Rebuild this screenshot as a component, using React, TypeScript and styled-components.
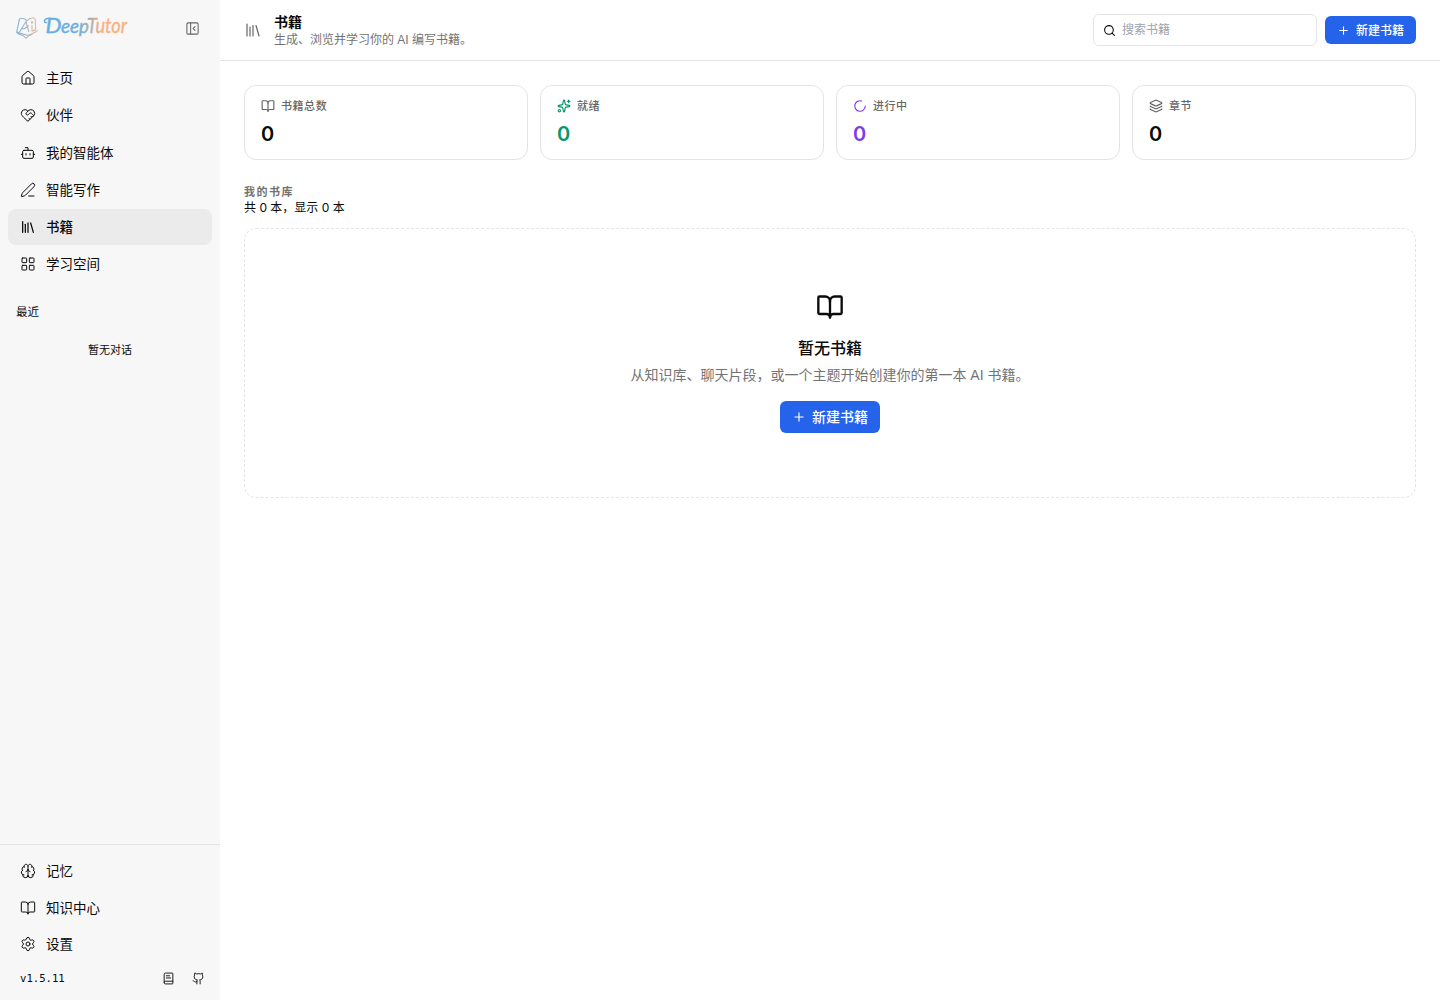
import React from 'react';
import styled, { createGlobalStyle } from 'styled-components';
import {
  BookOpen,
  Bot,
  Brain,
  Github,
  HeartHandshake,
  House,
  Layers,
  LayoutGrid,
  Library,
  LoaderCircle,
  PanelLeftClose,
  PenLine,
  Plus,
  Search,
  Settings,
  Sparkles,
  BookText,
} from 'lucide-react';

const GlobalStyle = createGlobalStyle`
  * {
    box-sizing: border-box;
  }
  body {
    margin: 0;
    background: #fff;
    color: #0a0a0a;
    font-family: Inter, 'Noto Sans CJK SC', sans-serif;
    font-size: 14px;
    line-height: 1.5;
    -webkit-font-smoothing: antialiased;
  }
  h1, h2, p {
    margin: 0;
  }
  svg {
    flex-shrink: 0;
  }
`;

const Layout = styled.div`
  display: flex;
  height: 100vh;
  overflow: hidden;
`;

const Sidebar = styled.aside`
  display: flex;
  flex-direction: column;
  width: 220px;
  flex-shrink: 0;
  background: #f7f7f7;
`;

const SidebarHeader = styled.div`
  display: flex;
  align-items: center;
  justify-content: space-between;
  height: 56px;
  padding: 0 20px 0 16px;
  color: #666;
`;

const Nav = styled.nav<{ $gap: number }>`
  display: flex;
  flex-direction: column;
  gap: ${({ $gap }) => $gap}px;
  padding: 0 8px;
`;

const MainNav = styled(Nav)`
  margin-top: 4px;
`;

const NavItem = styled.a<{ $active?: boolean }>`
  display: flex;
  align-items: center;
  gap: 10px;
  padding: 8px 12px;
  border-radius: 8px;
  font-size: 13.5px;
  line-height: 20.25px;
  font-weight: ${({ $active }) => ($active ? 500 : 400)};
  background: ${({ $active }) => ($active ? '#ebebeb' : 'transparent')};
`;

const RecentTitle = styled.div`
  margin-top: 21px;
  padding: 0 16px;
  font-size: 11.5px;
  line-height: 16.5px;
`;

const RecentEmpty = styled.div`
  margin-top: 22px;
  text-align: center;
  font-size: 11px;
  line-height: 16.5px;
`;

const SidebarFooter = styled.div`
  margin-top: auto;
  height: 156px;
  padding-top: 8px;
  border-top: 1px solid #e4e4e4;
`;

const VersionRow = styled.div`
  display: flex;
  align-items: center;
  justify-content: space-between;
  height: 32px;
  padding: 0 15px 0 20px;
  font-family: 'DejaVu Sans Mono', monospace;
  font-size: 10.6px;
`;

const VersionText = styled.span`
  padding-top: 2px;
`;

const VersionLinks = styled.div`
  display: flex;
  gap: 17px;
`;

const Main = styled.main`
  flex: 1;
  min-width: 0;
`;

const PageHeader = styled.header`
  display: flex;
  align-items: center;
  justify-content: space-between;
  height: 61px;
  padding: 0 24px;
  border-bottom: 1px solid #e4e4e4;
`;

const HeaderLeft = styled.div`
  display: flex;
  align-items: center;
  gap: 12px;
  color: #666;
`;

const HeaderText = styled.div`
  padding-top: 2px;
`;

const PageTitle = styled.h1`
  color: #0a0a0a;
  font-size: 14px;
  font-weight: 600;
  line-height: 17.5px;
`;

const PageSubtitle = styled.p`
  color: #737373;
  font-family: 'Liberation Sans', 'Noto Sans CJK SC', sans-serif;
  font-size: 12px;
  line-height: 18px;
`;

const HeaderRight = styled.div`
  display: flex;
  align-items: center;
  gap: 8px;
`;

const SearchBox = styled.label`
  display: flex;
  align-items: center;
  gap: 6px;
  width: 224px;
  height: 32px;
  padding: 0 9px;
  border: 1px solid #e4e4e4;
  border-radius: 6px;
`;

const SearchInput = styled.input`
  flex: 1;
  min-width: 0;
  padding: 0 0 2px;
  border: 0;
  outline: 0;
  background: transparent;
  font-family: inherit;
  font-size: 12px;

  &::placeholder {
    color: #9ca3af;
  }
`;

const PrimaryBtn = styled.button<{ $small?: boolean }>`
  display: inline-flex;
  align-items: center;
  justify-content: center;
  gap: 6px;
  height: ${({ $small }) => ($small ? 28 : 32)}px;
  padding: 0 12px;
  border: 0;
  border-radius: 6px;
  background: #2563eb;
  color: #fff;
  font-family: inherit;
  font-size: ${({ $small }) => ($small ? 12 : 14)}px;
  font-weight: 500;

  span {
    padding-bottom: 2px;
  }
`;

const Content = styled.section`
  padding: 24px;
`;

const StatGrid = styled.div`
  display: grid;
  grid-template-columns: repeat(4, 1fr);
  gap: 12px;
`;

const StatCard = styled.div<{ $color: string; $icon: string }>`
  height: 75px;
  padding: 12px 16px;
  border: 1px solid #e4e4e4;
  border-radius: 12px;
  color: ${({ $color }) => $color};

  svg {
    color: ${({ $icon }) => $icon};
  }
`;

const StatLabel = styled.div`
  display: flex;
  align-items: center;
  gap: 6px;
  color: #666;
  font-size: 11px;
  font-weight: 500;
  line-height: 16.5px;
  letter-spacing: 0.05em;
`;

const StatValue = styled.div`
  margin-top: 5px;
  font-size: 20px;
  font-weight: 600;
  line-height: 28px;
`;

const LibraryTitle = styled.h2`
  margin-top: 24px;
  color: #737373;
  font-size: 11px;
  font-weight: 600;
  line-height: 16.5px;
  letter-spacing: 0.14em;
`;

const LibraryCount = styled.p`
  height: 15px;
  font-size: 12px;
  line-height: 14px;
`;

const EmptyPanel = styled.div`
  display: flex;
  flex-direction: column;
  align-items: center;
  height: 270px;
  margin-top: 12px;
  padding-top: 64px;
  border: 1px dashed #e4e4e4;
  border-radius: 12px;
`;

const EmptyTitle = styled.h2`
  margin-top: 15px;
  font-size: 16px;
  font-weight: 500;
  line-height: 24px;
`;

const EmptyText = styled.p`
  margin: 5px 0 16px;
  color: #737373;
  font-family: 'Liberation Sans', 'Noto Sans CJK SC', sans-serif;
  font-size: 14px;
  line-height: 20px;
`;

const Logo = () => (
  <svg width="120" height="34" viewBox="0 0 120 34" fill="none">
    <defs>
      <linearGradient id="mark" x1="0" y1="0" x2="22" y2="0" gradientUnits="userSpaceOnUse">
        <stop offset="0.1" stopColor="#7fb2dc" />
        <stop offset="0.6" stopColor="#b5b5b5" />
        <stop offset="1" stopColor="#efbd98" />
      </linearGradient>
      <linearGradient id="word" x1="28" y1="0" x2="112" y2="0" gradientUnits="userSpaceOnUse">
        <stop offset="0.4" stopColor="#6aaee0" />
        <stop offset="0.56" stopColor="#b0b0ac" />
        <stop offset="0.68" stopColor="#f7b27f" />
      </linearGradient>
    </defs>
    <g transform="translate(0 1)" stroke="url(#mark)" strokeWidth="1.1" strokeLinecap="round" strokeLinejoin="round">
      <path d="M3.200 8 1 18.500c-.4 2 .3 3.300 2.300 3.800 2.700.6 4.700.7 6.700 4 1.700-2.500 3.700-3.300 6-3.800" />
      <path d="M3.200 8c.4-1.500 1.300-1.900 2.800-1.700 2 .2 3.700.9 5 2.500 1.300-1.600 3.500-2.800 5.800-3 1.600-.1 2.400.5 2.500 2l.4 10.500" />
      <path d="M3.500 20 10 9.500l2.800 10.200M5.500 17c3 0 5-1.200 6.800-3" />
      <path d="M16 13.500v5.200c1 .5 2-.2 3-1" />
      <path d="M1 20c2.500 2.300 6 1.500 8.500 2.700 2.500 1.200 4.500.3 6.500-1 1.500-1 3.700-1.200 5.300-3" />
      <circle cx="16" cy="10.500" r=".6" />
    </g>
    <path d="M30.500 11.500c-2.300.3-2.700-2-1.200-3.200 1.200-.9 2.800-1.100 5-1.100" stroke="#6aaee0" strokeWidth="1.500" strokeLinecap="round" />
    <g
      fill="url(#word)"
      stroke="url(#word)"
      strokeWidth="0.4"
      fontFamily="Lato, sans-serif"
      fontSize="20.500"
      fontStyle="italic"
      fontWeight="400"
    >
      <text x="29.500" y="22" textLength="16" lengthAdjust="spacingAndGlyphs">
        D
      </text>
      <text x="45" y="22" fontSize="19" textLength="28" lengthAdjust="spacingAndGlyphs">
        eep
      </text>
      <text x="71" y="22" textLength="40" lengthAdjust="spacingAndGlyphs">
        Tutor
      </text>
    </g>
  </svg>
);

const mainItems = [
  { label: '主页', icon: House },
  { label: '伙伴', icon: HeartHandshake },
  { label: '我的智能体', icon: Bot },
  { label: '智能写作', icon: PenLine },
  { label: '书籍', icon: Library, active: true },
  { label: '学习空间', icon: LayoutGrid },
];

const footerItems = [
  { label: '记忆', icon: Brain },
  { label: '知识中心', icon: BookOpen },
  { label: '设置', icon: Settings },
];

const stats = [
  { label: '书籍总数', icon: BookOpen, color: '#0a0a0a', iconColor: '#666' },
  { label: '就绪', icon: Sparkles, color: '#059669', iconColor: '#059669' },
  { label: '进行中', icon: LoaderCircle, color: '#7c3aed', iconColor: '#7c3aed' },
  { label: '章节', icon: Layers, color: '#0a0a0a', iconColor: '#666' },
];

const App = () => {
  return (
    <>
      <GlobalStyle />
      <Layout>
        <Sidebar>
          <SidebarHeader>
            <Logo />
            <PanelLeftClose size={15} strokeWidth={1.7} />
          </SidebarHeader>
          <MainNav $gap={1}>
            {mainItems.map(({ label, icon: Icon, active }) => (
              <NavItem key={label} $active={active}>
                <Icon size={16} strokeWidth={active ? 1.9 : 1.5} />
                {label}
              </NavItem>
            ))}
          </MainNav>
          <RecentTitle>最近</RecentTitle>
          <RecentEmpty>暂无对话</RecentEmpty>
          <SidebarFooter>
            <Nav $gap={0.25}>
              {footerItems.map(({ label, icon: Icon }) => (
                <NavItem key={label}>
                  <Icon size={16} strokeWidth={1.5} />
                  {label}
                </NavItem>
              ))}
            </Nav>
            <VersionRow>
              <VersionText>v1.5.11</VersionText>
              <VersionLinks>
                <BookText size={13} strokeWidth={1.7} />
                <Github size={13} strokeWidth={1.7} />
              </VersionLinks>
            </VersionRow>
          </SidebarFooter>
        </Sidebar>
        <Main>
          <PageHeader>
            <HeaderLeft>
              <Library size={18} strokeWidth={1.6} />
              <HeaderText>
                <PageTitle>书籍</PageTitle>
                <PageSubtitle>生成、浏览并学习你的 AI 编写书籍。</PageSubtitle>
              </HeaderText>
            </HeaderLeft>
            <HeaderRight>
              <SearchBox>
                <Search size={13} />
                <SearchInput placeholder="搜索书籍" />
              </SearchBox>
              <PrimaryBtn $small>
                <Plus size={13} />
                <span>新建书籍</span>
              </PrimaryBtn>
            </HeaderRight>
          </PageHeader>
          <Content>
            <StatGrid>
              {stats.map(({ label, icon: Icon, color, iconColor }) => (
                <StatCard key={label} $color={color} $icon={iconColor}>
                  <StatLabel>
                    <Icon size={14} />
                    {label}
                  </StatLabel>
                  <StatValue>0</StatValue>
                </StatCard>
              ))}
            </StatGrid>
            <LibraryTitle>我的书库</LibraryTitle>
            <LibraryCount>共 0 本，显示 0 本</LibraryCount>
            <EmptyPanel>
              <BookOpen size={28} />
              <EmptyTitle>暂无书籍</EmptyTitle>
              <EmptyText>从知识库、聊天片段，或一个主题开始创建你的第一本 AI 书籍。</EmptyText>
              <PrimaryBtn>
                <Plus size={14} />
                <span>新建书籍</span>
              </PrimaryBtn>
            </EmptyPanel>
          </Content>
        </Main>
      </Layout>
    </>
  );
};

export default App;
